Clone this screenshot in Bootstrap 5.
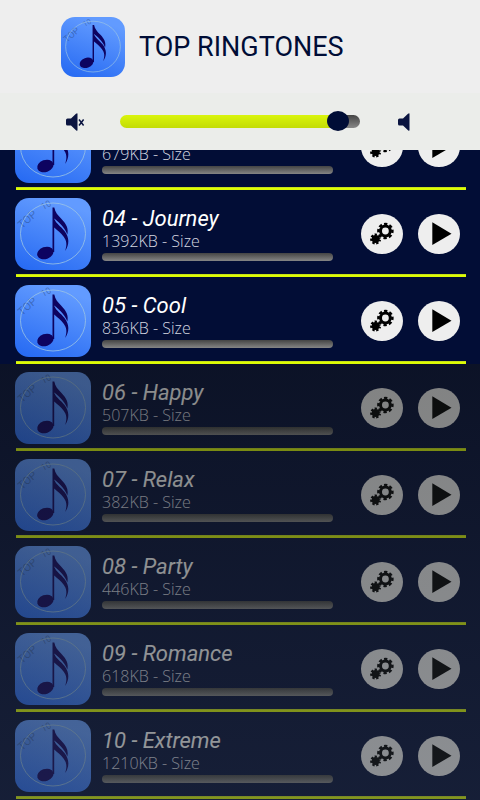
<!DOCTYPE html>
<html lang="en">
<head>
<meta charset="utf-8">
<meta name="viewport" content="width=device-width, initial-scale=1">
<title>Top Ringtones</title>
<link href="https://cdn.jsdelivr.net/npm/bootstrap@5.3.0/dist/css/bootstrap.min.css" rel="stylesheet">
<style>
  body { background: #020d36; font-family: Roboto, sans-serif; }
  .app-head { background: #eee; }
  .brand-row { height: 93px; padding-left: 61px; gap: 14px; }
  .brand-row svg { width: 64px; height: 60px; }
  .brand-name { font-size: 27px; line-height: 32px; color: #000d36; }
  .volume-row { height: 57px; background: #ebedea; padding: 0 62px 0 66px; }
  .volume-row svg { width: 20px; height: 18px; fill: #0a1440; }
  .volume { appearance: none; height: 22px; margin: 0 38px 0 34px; background: transparent; min-width: 0; }
  .volume::-webkit-slider-runnable-track { height: 13px; border-radius: 7px;
    background: linear-gradient(#daf50c, #c3dc06) 0 0 / 91% 100% no-repeat, linear-gradient(#444, #888); }
  .volume::-webkit-slider-thumb { appearance: none; width: 22px; height: 20px; margin-top: -4px; border-radius: 50%; background: #000d36; }
  .art { border-radius: 14px; background: linear-gradient(20deg, #2468f2, #629bff 85%); }
  /* the list starts scrolled part-way under the header */
  .tones { margin-top: -47px; }
  .tone { padding: 8px 14px 0 15px; }
  .tone .art { width: 76px; height: 72px; }
  .tone-body { margin: 9px 28px 0 11px; min-width: 0; }
  .tone-name { font-size: 22px; line-height: 24px; font-style: italic; color: #fff; }
  .tone-size { font: 300 16px/20px "Open Sans", sans-serif; color: #d4d7e0; }
  .tone-bar { height: 8px; margin-top: 2px; border-radius: 4px; background: linear-gradient(#444, #858585); }
  .tone-acts { gap: 15px; margin: 16px 6px 0 0; }
  .round-btn { width: 42px; height: 40px; border-radius: 50%; background: #eee; }
  .round-btn svg { width: 42px; height: 40px; display: block; }
  .rule { height: 3px; margin: 4px 0 0 1px; background: linear-gradient(#b5cc2a, #e0ff00 40%, #d8f808); }
  .dimmed::after { content: ""; position: absolute; inset: 0; pointer-events: none;
    background: linear-gradient(rgba(22, 24, 24, .5), rgba(42, 48, 56, .5)); }
</style>
<script src="https://cdn.jsdelivr.net/npm/bootstrap@5.3.0/dist/js/bootstrap.bundle.min.js"></script>
</head>
<body class="d-flex flex-column min-vh-100 overflow-hidden">

<svg class="d-none" aria-hidden="true">
  <symbol id="note" viewBox="0 0 76 72" preserveAspectRatio="none">
    <g font-family="Roboto, sans-serif" fill="#24406f" fill-opacity=".45">
      <text x="7" y="31" transform="rotate(-42 7 31)" font-size="11">TOP</text>
      <text x="28" y="12" transform="rotate(-28 28 12)" font-size="9">10</text>
    </g>
    <ellipse cx="38" cy="35.5" rx="32.5" ry="30.5" fill="none" stroke="#9cc4e4" stroke-opacity=".8" stroke-width="1"/>
    <g fill="#0d0360">
      <ellipse cx="30.300" cy="55" rx="8.400" ry="6" transform="rotate(-20 30.3 55)"/>
      <path d="M37.500 9.500h1.800C40 14 43 17.500 46.500 21C51.500 26 53.700 31 52.300 36.500C50.500 31 46 26 39.300 20.500V21C41 25.500 46 28.500 49.500 33C54.500 39.500 54.500 46.500 50.200 53C52 47 52 43 48.500 38.500C46 35 42.500 32.500 39.200 29.500V54h-1.700z"/>
    </g>
  </symbol>
  <symbol id="gears" viewBox="0 0 42 40">
    <g fill="none" stroke="#000">
      <circle cx="24.400" cy="17" r="4.900" stroke-width="3"/>
      <circle cx="24.400" cy="17" r="7" stroke-width="2.500" pathLength="16" stroke-dasharray="1.200 .8" stroke-dashoffset=".5"/>
      <circle cx="14.600" cy="25" r="4.400" stroke-width="2.200" pathLength="14" stroke-dasharray="1.200 .8"/>
    </g>
    <circle cx="14.600" cy="25" r="3.900"/>
  </symbol>
  <symbol id="play" viewBox="0 0 42 40"><path d="M14.300 8.300L33.500 19.700L14.300 31z"/></symbol>
</svg>

<header class="app-head position-relative z-1">
  <div class="brand-row d-flex align-items-center">
    <svg class="art" aria-hidden="true"><use href="#note"/></svg>
    <h1 class="brand-name fw-normal mb-0">TOP RINGTONES</h1>
  </div>
  <div class="volume-row d-flex align-items-center">
    <svg class="flex-shrink-0" viewBox="0 0 20 18" aria-hidden="true"><path d="M1.500 5.500H5L10 .8Q11.500-.3 11.500 1V17Q11.500 18.300 10 17.200L5 12.500H1.500Q0 12.500 0 11V7Q0 5.500 1.500 5.500z"/><path d="M13 6.500L17.600 12.500M17.600 6.500L13 12.500" stroke="#0a1440" stroke-width="1.500"/></svg>
    <input class="volume flex-grow-1" type="range" min="0" max="100" step="1" value="95" aria-label="Volume">
    <svg class="flex-shrink-0" viewBox="0 0 20 18" aria-hidden="true"><path d="M1.500 5.500H5L10 .8Q11.500-.3 11.500 1V17Q11.500 18.300 10 17.200L5 12.500H1.500Q0 12.500 0 11V7Q0 5.500 1.500 5.500z"/></svg>
  </div>
</header>

<main class="tones d-flex flex-column flex-grow-1">
  <div id="top-list"></div>
  <div id="rest-list" class="dimmed position-relative flex-grow-1"></div>
</main>

<script>
  const tones = [
    ["03 - Summer", "679KB"], ["04 - Journey", "1392KB"], ["05 - Cool", "836KB"],
    ["06 - Happy", "507KB"], ["07 - Relax", "382KB"], ["08 - Party", "446KB"],
    ["09 - Romance", "618KB"], ["10 - Extreme", "1210KB"]
  ];
  const row = ([name, size]) => `
    <article class="tone">
      <div class="d-flex align-items-start">
        <svg class="art flex-shrink-0" aria-hidden="true"><use href="#note"/></svg>
        <div class="tone-body flex-grow-1">
          <h2 class="tone-name fw-normal mb-0 text-nowrap">${name}</h2>
          <p class="tone-size mb-0">${size} - Size</p>
          <div class="tone-bar" role="progressbar" aria-label="${name}" aria-valuenow="0" aria-valuemin="0" aria-valuemax="100"></div>
        </div>
        <div class="tone-acts d-flex flex-shrink-0">
          <button type="button" class="round-btn border-0 p-0" aria-label="Settings"><svg aria-hidden="true"><use href="#gears"/></svg></button>
          <button type="button" class="round-btn border-0 p-0" aria-label="Play"><svg aria-hidden="true"><use href="#play"/></svg></button>
        </div>
      </div>
      <div class="rule"></div>
    </article>`;
  document.getElementById("top-list").innerHTML = tones.slice(0, 3).map(row).join("");
  document.getElementById("rest-list").innerHTML = tones.slice(3).map(row).join("");
</script>
</body>
</html>
